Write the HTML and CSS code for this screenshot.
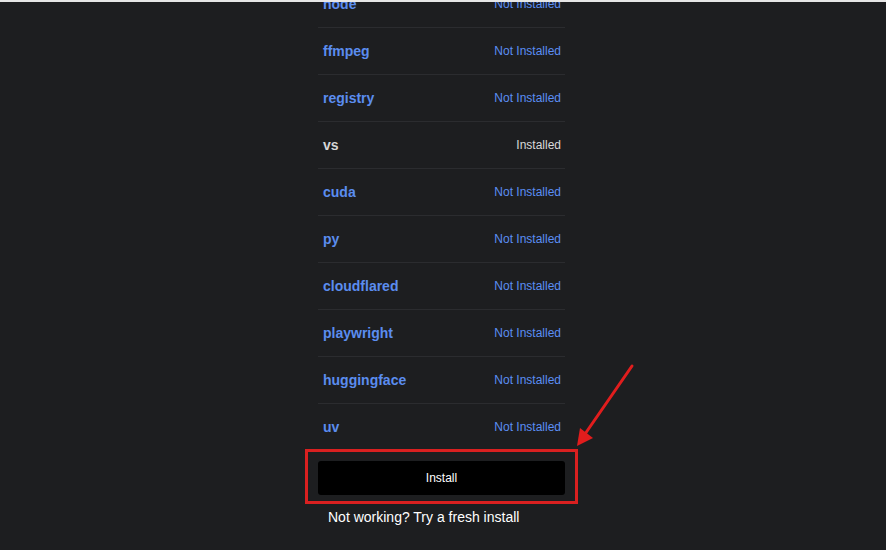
FILE: index.html
```html
<!DOCTYPE html>
<html lang="en">
<head>
<meta charset="utf-8">
<title>Dependencies</title>
<link rel="stylesheet" href="styles.css">
</head>
<body>
<div class="topedge"></div>
<main class="panel">
  <ul class="deps">
    <li class="dep"><span class="name">node</span><span class="status">Not Installed</span></li>
    <li class="dep"><span class="name">ffmpeg</span><span class="status">Not Installed</span></li>
    <li class="dep"><span class="name">registry</span><span class="status">Not Installed</span></li>
    <li class="dep ok"><span class="name">vs</span><span class="status">Installed</span></li>
    <li class="dep"><span class="name">cuda</span><span class="status">Not Installed</span></li>
    <li class="dep"><span class="name">py</span><span class="status">Not Installed</span></li>
    <li class="dep"><span class="name">cloudflared</span><span class="status">Not Installed</span></li>
    <li class="dep"><span class="name">playwright</span><span class="status">Not Installed</span></li>
    <li class="dep"><span class="name">huggingface</span><span class="status">Not Installed</span></li>
    <li class="dep"><span class="name">uv</span><span class="status">Not Installed</span></li>
  </ul>
  <button class="install">Install</button>
  <a class="fresh">Not working? Try a fresh install</a>
</main>
<div class="highlight"></div>
<svg class="arrow" width="80" height="100" viewBox="0 0 80 100">
  <line x1="62" y1="11" x2="15" y2="79" stroke="#e11d1d" stroke-width="3" stroke-linecap="round"/>
  <polygon points="7,91 10,73 23,83" fill="#e11d1d"/>
</svg>
</body>
</html>
```

FILE: styles.css
```css
html, body {
  margin: 0;
  padding: 0;
  height: 100%;
  overflow: hidden;
}

body {
  background: #1d1e20;
  font-family: "Liberation Sans", Arial, sans-serif;
  position: relative;
}

.topedge {
  position: absolute;
  left: 0;
  top: 0;
  width: 100%;
  height: 2px;
  background: #e6e6e6;
}

.panel {
  width: 247px;
  margin-left: 318px;
  display: flex;
  flex-direction: column;
}

.deps {
  list-style: none;
  margin: -19px 0 0 0;
  padding: 0;
}

.dep {
  height: 46px;
  border-bottom: 1px solid #2b2c2f;
  display: flex;
  align-items: center;
  justify-content: space-between;
  padding: 0 4px 0 5px;
}

.name {
  font-size: 14px;
  font-weight: bold;
  color: #5b8def;
}

.status {
  font-size: 12px;
  color: #5b8ef4;
}

.dep.ok .name {
  color: #d6d6d6;
}

.dep.ok .status {
  color: #d9d9d9;
}

.install {
  margin-top: 10px;
  height: 34px;
  background: #000;
  color: #fff;
  border: none;
  border-radius: 3px;
  font-family: "Liberation Sans", Arial, sans-serif;
  font-size: 12px;
  padding: 0;
}

.fresh {
  margin-top: 14px;
  padding-left: 10px;
  font-size: 14px;
  color: #fff;
  line-height: 16px;
}

.highlight {
  position: absolute;
  left: 305px;
  top: 449px;
  width: 267px;
  height: 49px;
  border: 3px solid #d92020;
}

.arrow {
  position: absolute;
  left: 570px;
  top: 355px;
}
```
